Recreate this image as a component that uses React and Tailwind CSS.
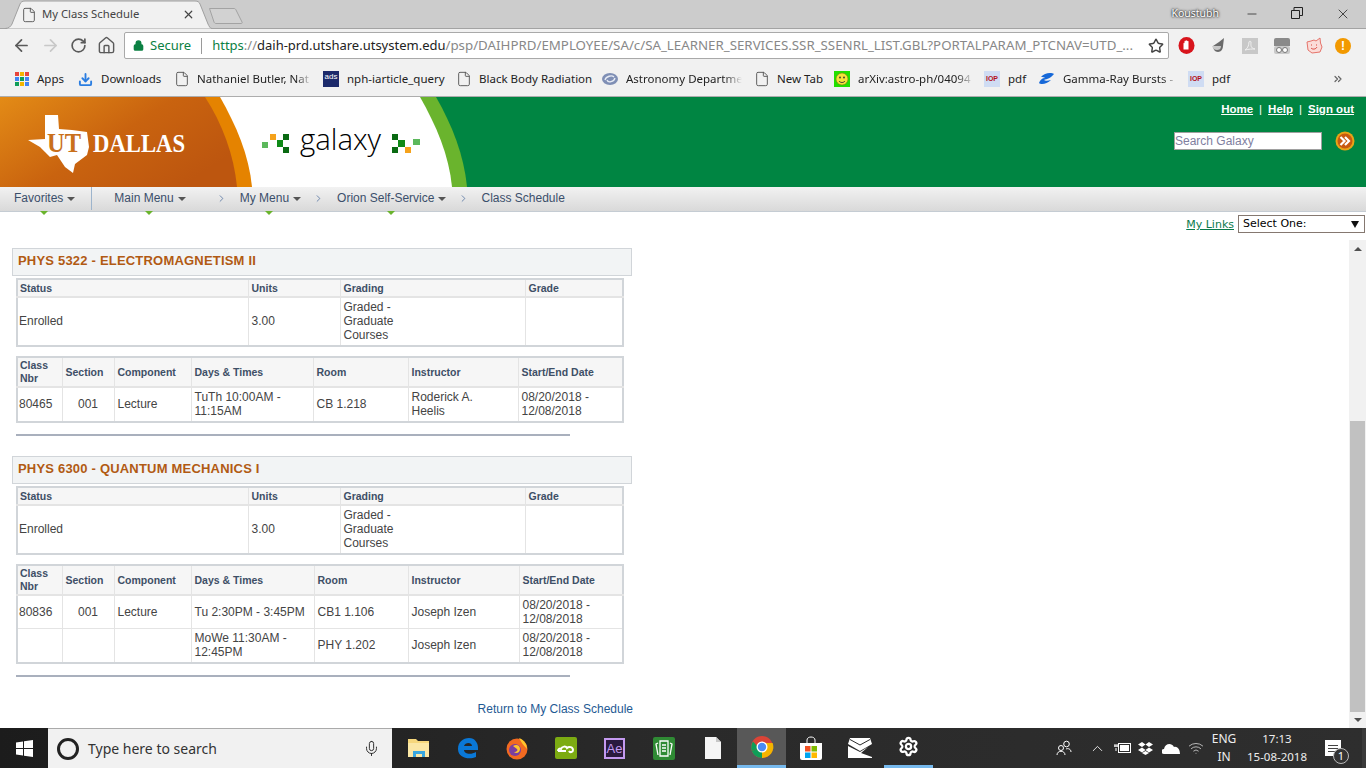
import React from "react";
import { ArrowLeft, ArrowRight, RotateCw, Home, Star, Lock, X, Minus, ChevronRight, ChevronUp, Mic, File, Download, ChevronsRight, Settings, Wifi } from "lucide-react";

const bookmarks = [
  { width: 63, icon: "apps", label: "Apps" },
  { width: 97, icon: "download", label: "Downloads" },
  { width: 148, icon: "doc", label: "Nathaniel Butler, Nat", fade: true },
  { width: 134, icon: "ads", label: "nph-iarticle_query" },
  { width: 145, icon: "doc", label: "Black Body Radiation" },
  { width: 153, icon: "astro", label: "Astronomy Departme", fade: true },
  { width: 79, icon: "doc", label: "New Tab" },
  { width: 150, icon: "smile", label: "arXiv:astro-ph/04094", fade: true },
  { width: 54, icon: "iop", label: "pdf" },
  { width: 150, icon: "gamma", label: "Gamma-Ray Bursts -", fade: true },
  { width: 60, icon: "iop", label: "pdf" },
];

const BookmarkIcon = ({ type }) => {
  if (type === "apps") {
    const colors = ["#e8453c", "#f4b400", "#e8453c", "#4285f4", "#0f9d58", "#4285f4", "#0f9d58", "#f4b400", "#4285f4"];
    return (
      <div className="grid grid-cols-3 gap-[1.5px] w-[14px] h-[14px] shrink-0">
        {colors.map((c, i) => (
          <div key={i} style={{ backgroundColor: c }} />
        ))}
      </div>
    );
  }
  if (type === "download") return <Download size={15} strokeWidth={3} className="text-[#2a7de1] shrink-0" />;
  if (type === "doc") return <File size={16} strokeWidth={1.4} className="text-[#555] shrink-0 -mx-[1px]" />;
  if (type === "ads")
    return (
      <div className="w-4 h-4 bg-[#1c2a6b] text-white text-[8px] leading-[12px] text-center shrink-0 font-['Liberation_Sans',sans-serif]">ads</div>
    );
  if (type === "astro")
    return (
      <svg width="16" height="16" viewBox="0 0 16 16" className="shrink-0">
        <ellipse cx="8" cy="8" rx="8" ry="6" fill="#7f8fb5" />
        <path d="M3 9c1-4 7-5 9-3M13 7c-1 4-7 5-8 2" stroke="#e8ecf5" strokeWidth="1.3" fill="none" />
      </svg>
    );
  if (type === "smile")
    return (
      <svg width="16" height="16" viewBox="0 0 16 16" className="shrink-0">
        <rect width="16" height="16" fill="#22e000" />
        <circle cx="8" cy="8" r="6" fill="#f5e23a" stroke="#7a7a10" strokeWidth="0.6" />
        <circle cx="6" cy="6.5" r="0.9" fill="#333" />
        <circle cx="10" cy="6.5" r="0.9" fill="#333" />
        <path d="M5 10c1.5 2 4.5 2 6 0" stroke="#333" fill="none" />
      </svg>
    );
  if (type === "iop")
    return (
      <div className="w-4 h-4 bg-[#cfdcf3] text-[#b5121b] text-[7px] font-bold leading-4 text-center shrink-0 font-['Liberation_Sans',sans-serif]">IOP</div>
    );
  return (
    <svg width="17" height="16" viewBox="0 0 17 16" className="shrink-0">
      <path d="M1 12c2 2 8 1 12-3-3 1-6 1-7 0 3-1 7-2 10-6C13 1 6 2 3 6c2 0 3 0 4 1-3 0-5 2-6 5z" fill="#1668d8" />
    </svg>
  );
};

const ChromeBar = () => (
  <div className="font-['Noto_Sans',sans-serif] text-[#222]">
    {/* tab strip */}
    <div className="flex h-[28px] bg-[#cccccc] relative">
      <div className="relative w-[207px] ml-[5px] h-[29px] flex items-center pl-[16px] pr-[10px] z-10">
        <svg className="absolute left-0 top-0" width="207" height="29" viewBox="0 0 207 29">
          <path d="M0 28.5C4 28.5 6 26 7 24L15 4C16 2 17 1 20 1H190C193 1 194 2 195 4L203 24C204 26 205 28.5 207 28.5" fill="#f1f1f1" stroke="#a0a0a0" />
        </svg>
        <File size={16} strokeWidth={1.4} className="relative text-[#555] shrink-0" />
        <span className="relative ml-[5px] text-[11.3px] text-[#444] flex-1">My Class Schedule</span>
        <X size={13} strokeWidth={2.2} className="relative text-[#444] mr-[7px]" />
      </div>
      <svg className="mt-[7px] -ml-[4px]" width="36" height="18" viewBox="0 0 36 18">
        <path d="M1.5 1.5H26c1 0 1.5 .5 2 1.5L34 15c.5 1 0 1.5-1 1.5H8c-1 0-1.5-.5-2-1.5Z" fill="#d2d2d2" stroke="#a3a3a3" />
      </svg>
      <div className="ml-auto flex items-center h-[28px]">
        <span className="text-[10.5px] text-white [text-shadow:0_0_2px_#000,0_0_3px_#333] mr-[26px] -mt-[1px]">Koustubh</span>
        <Minus size={14} strokeWidth={1.3} className="text-[#222] mr-[32px]" />
        <svg width="12" height="12" viewBox="0 0 12 12" className="mr-[32px] -mt-[2px]">
          <path d="M.5 3.5h8v8h-8zM3 3.5V.5h8.500v8H8.500" fill="none" stroke="#222" />
        </svg>
        <X size={16} strokeWidth={1.2} className="text-[#222] mr-[15px]" />
      </div>
    </div>
    {/* toolbar */}
    <div className="flex items-center h-[34px] bg-[#f1f1f1] border-t border-[#a3a3a3]">
      <ArrowLeft size={19} strokeWidth={2.2} className="ml-[12px] text-[#5a5a5a]" />
      <ArrowRight size={19} strokeWidth={2.2} className="ml-[10px] text-[#c8c8c8]" />
      <RotateCw size={17} strokeWidth={2.4} className="ml-[10px] text-[#5a5a5a]" />
      <Home size={19} strokeWidth={1.8} className="ml-[10px] text-[#5a5a5a]" />
      <div className="ml-[8px] w-[1045px] h-[27px] flex items-center bg-white border border-[#a9a9a9] rounded-[2px] whitespace-nowrap overflow-hidden">
        <Lock size={11} strokeWidth={3} className="ml-[8px] text-[#0b8043] fill-[#0b8043]" />
        <span className="ml-[6px] text-[13px] text-[#0b8043]">Secure</span>
        <span className="ml-[10px] w-px h-[16px] bg-[#9a9a9a]" />
        <span className="ml-[10px] text-[13px]">
          <span className="text-[#0b8043]">https</span>
          <span className="text-[#888]">://</span>
          <span className="text-[#222]">daih-prd.utshare.utsystem.edu</span>
          <span className="text-[#888] text-[13.3px]">/psp/DAIHPRD/EMPLOYEE/SA/c/SA_LEARNER_SERVICES.SSR_SSENRL_LIST.GBL?PORTALPARAM_PTCNAV=UTD_...</span>
        </span>
        <Star size={16} strokeWidth={2.2} className="ml-auto mr-[4px] text-[#444] shrink-0" />
      </div>
      {/* extensions */}
      <div className="flex items-center">
        <svg width="17" height="17" viewBox="0 0 17 17" className="ml-[9px]">
          <ellipse cx="8.500" cy="8.500" rx="8" ry="8.500" fill="#d8141c" />
          <path d="M5.500 12.500V6.500c0-1 1-1 1 0V4.500c0-1 1-1 1 0V4c0-1 1.500-1 1.500 0v.500c0-1 1.500-1 1.500 0v8z" fill="#fff" />
        </svg>
        <svg width="17" height="17" viewBox="0 0 17 17" className="ml-[16px]">
          <path d="M2 9l6-4 5-4-1 8c0 3-2 6-5 6S2 12 2 9z" fill="#6b6b6b" />
          <path d="M1 9h9c0 3-2 4-4 4s-4-1-5-4z" fill="#c8c8c8" />
        </svg>
        <div className="ml-[14px] w-[16px] h-[16px] bg-[#c8c8c8] flex items-center justify-center">
          <svg width="12" height="12" viewBox="0 0 12 12">
            <path d="M1 10c2-1 4-4 4-8 0-1 2-1 2 0 0 3-1 6 4 7-3 0-6 0-10 1z" fill="none" stroke="#f1f1f1" />
          </svg>
        </div>
        <svg width="16" height="16" viewBox="0 0 16 16" className="ml-[16px]">
          <path d="M2 0h12a2 2 0 0 1 2 2v6H0V2a2 2 0 0 1 2-2z" fill="#8a8a8a" />
          <rect y="8" width="16" height="8" rx="2" fill="#c9c9c9" />
          <circle cx="5" cy="12" r="2.500" fill="#fff" stroke="#777" />
          <circle cx="11" cy="12" r="2.500" fill="#fff" stroke="#777" />
        </svg>
        <svg width="17" height="17" viewBox="0 0 17 17" className="ml-[16px]">
          <path d="M1 5l4-1 3-1 2 1 4-3 .5 5L16 10l-2 5-8 1-4-3z" fill="#fbdcd8" stroke="#e5746b" />
          <path d="M5 8h1M10 8h1M5 11c2 2 5 1 6-1" stroke="#d9463c" fill="none" />
        </svg>
        <div className="ml-[12px] w-[16px] h-[16px] rounded-full bg-[#f29900] text-white text-[12px] font-bold leading-[16px] text-center font-['Liberation_Sans',sans-serif]">!</div>
      </div>
    </div>
    {/* bookmarks */}
    <div className="flex items-center h-[35px] bg-[#f1f1f1] pl-[15px] border-b border-[#adadad] text-[11.5px] whitespace-nowrap">
      {bookmarks.map((b, i) => (
        <div key={i} style={{ width: b.width }} className="flex items-center shrink-0 gap-[8px]">
          <BookmarkIcon type={b.icon} />
          <span className={b.fade ? "overflow-hidden w-[116px] [mask-image:linear-gradient(to_right,black_85%,transparent)]" : ""}>{b.label}</span>
        </div>
      ))}
      <ChevronsRight size={12} strokeWidth={2.4} className="ml-[84px] text-[#666]" />
    </div>
  </div>
);

const SiteHeader = () => (
  <div className="relative h-[90px] bg-[#008542] flex justify-end font-['Liberation_Sans',sans-serif]">
    <svg className="absolute left-0 top-0" width="480" height="90" viewBox="0 0 480 90">
      <defs>
        <linearGradient id="uto" x1="0" y1="0" x2="1" y2="0.6">
          <stop offset="0" stopColor="#e38b16" />
          <stop offset="0.55" stopColor="#c9630f" />
          <stop offset="1" stopColor="#bd560f" />
        </linearGradient>
      </defs>
      <path d="M436 0C452 28 464 58 467 90H0V0Z" fill="#6ab42d" />
      <path d="M420 0C436 28 449 58 452 90H0V0Z" fill="#fff" />
      <path d="M220 0C236 28 249 58 252 90H0V0Z" fill="#e58300" />
      <path d="M205 0C222 26 234 58 237 90H0V0Z" fill="url(#uto)" />
      {/* texas */}
      <path d="M45 18H58L59 32 72 33 87 35 89 50 87 58 75 67 73 76 65 70 57 58 50 60 45 55 40 50 28 43 45 42Z" fill="#fff" />
      <text x="47" y="55" fontFamily="'Liberation Serif',serif" fontSize="27" fontWeight="700" fill="#c9701c" textLength="34" lengthAdjust="spacingAndGlyphs">UT</text>
      <text x="93" y="55" fontFamily="'Liberation Serif',serif" fontSize="26" fontWeight="700" fill="#fff" textLength="92" lengthAdjust="spacingAndGlyphs">DALLAS</text>
      {/* galaxy mark */}
      <rect x="262" y="45" width="6" height="6" fill="#5cb85c" />
      <rect x="270" y="37" width="6" height="6" fill="#f5a21c" />
      <rect x="277" y="43" width="6" height="7" fill="#0f8a17" />
      <rect x="283" y="37" width="6" height="6" fill="#0a6a12" />
      <rect x="283" y="50" width="6" height="6" fill="#0a6a12" />
      <text x="300" y="53" fontFamily="'Open Sans',sans-serif" fontWeight="300" fontSize="29" fill="#000" textLength="81" lengthAdjust="spacingAndGlyphs">galaxy</text>
      <rect x="392" y="37" width="6" height="6" fill="#0a6a12" />
      <rect x="398" y="43" width="7" height="7" fill="#0f8a17" />
      <rect x="392" y="50" width="6" height="6" fill="#0a6a12" />
      <rect x="405" y="50" width="6" height="6" fill="#f5a21c" />
      <rect x="413" y="42" width="7" height="6" fill="#5cb85c" />
    </svg>
    <div className="relative pr-[12px] pt-[4px] flex flex-col items-end">
      <div className="flex items-center text-[11.5px] font-bold text-white">
        <span className="underline">Home</span>
        <span className="mx-[6px] font-normal">|</span>
        <span className="underline">Help</span>
        <span className="mx-[6px] font-normal">|</span>
        <span className="underline">Sign out</span>
      </div>
      <div className="flex items-center mt-[13px] -mr-[1px]">
        <div className="w-[148px] h-[18px] bg-white border border-[#a0a0a0] text-[12px] leading-[16px] text-[#7f7f9f]">Search Galaxy</div>
        <svg width="20" height="20" viewBox="0 0 20 20" className="ml-[13px]">
          <circle cx="10" cy="10" r="9.500" fill="#e8a317" />
          <circle cx="10" cy="10" r="7.500" fill="#c8590f" />
          <path d="M5.500 6l4 4-4 4M10 6l4 4-4 4" stroke="#fff" strokeWidth="2.200" fill="none" />
        </svg>
      </div>
    </div>
  </div>
);

const Caret = () => (
  <svg width="8" height="4" viewBox="0 0 8 4" className="ml-[4px] mt-[2px]">
    <path d="M0 0h8L4 4z" fill="#555" />
  </svg>
);

const NavItem = ({ label, className }) => (
  <div className={`relative flex items-center ${className}`}>
    {label}
    <Caret />
    <svg width="8" height="4" viewBox="0 0 8 4" className="absolute left-1/2 -bottom-[8px] -ml-[5px]">
      <path d="M0 0h8L4 4z" fill="#6ab42d" />
    </svg>
  </div>
);

const Chevron = ({ className }) => <ChevronRight size={11} strokeWidth={1.5} className={`text-[#3a5f95] ${className}`} />;

const NavBar = () => (
  <div className="flex items-center h-[25px] pl-[14px] pb-[2px] bg-gradient-to-b from-[#f2f2f2] to-[#d9d9d9] border-b border-[#c5ccd3] text-[12px] text-[#3b4f6b] font-['Liberation_Sans',sans-serif]">
    <NavItem label="Favorites" />
    <div className="ml-[16px] w-px h-[23px] bg-[#9db4cc]" />
    <NavItem label="Main Menu" className="ml-[22px]" />
    <Chevron className="ml-[30px]" />
    <NavItem label="My Menu" className="ml-[13px]" />
    <Chevron className="ml-[12px]" />
    <NavItem label="Orion Self-Service" className="ml-[13px]" />
    <Chevron className="ml-[12px]" />
    <span className="ml-[12px]">Class Schedule</span>
  </div>
);

const th = "border-r border-b-2 border-[#e4e4e4] bg-[#f6f6f6] text-left font-bold text-[10.5px] leading-[13px] text-[#3e4f66] px-[3px] first:pl-[2px] align-middle";
const td = "border-r border-b border-[#e4e4e4] text-[12px] leading-[14px] text-[#444] px-[3px] first:pl-[1px] align-middle";

const StatusTable = () => (
  <table className="w-[608px] table-fixed border-collapse border-2 border-[#d1d5d9] ml-[4px] mt-[2px]">
    <colgroup>
      <col className="w-[231px]" />
      <col className="w-[92px]" />
      <col className="w-[185px]" />
      <col />
    </colgroup>
    <tbody>
      <tr className="h-[18px]">
        <th className={th}>Status</th>
        <th className={th}>Units</th>
        <th className={th}>Grading</th>
        <th className={th}>Grade</th>
      </tr>
      <tr className="h-[49px]">
        <td className={`${td} pb-px`}>Enrolled</td>
        <td className={`${td} pb-px`}>3.00</td>
        <td className={`${td} pb-px`}>
          Graded -<br />Graduate<br />Courses
        </td>
        <td className={td}></td>
      </tr>
    </tbody>
  </table>
);

const ClassTable = ({ rows, wide }) => (
  <table className="w-[608px] table-fixed border-collapse border-2 border-[#d1d5d9] ml-[4px] mt-[9px]">
    <colgroup>
      <col className="w-[45px]" />
      <col className="w-[52px]" />
      <col className="w-[77px]" />
      <col className={wide ? "w-[123px]" : "w-[122px]"} />
      <col className={wide ? "w-[94px]" : "w-[95px]"} />
      <col className={wide ? "w-[111px]" : "w-[110px]"} />
      <col />
    </colgroup>
    <tbody>
      <tr className="h-[30px]">
        <th className={th}>Class<br />Nbr</th>
        <th className={th}>Section</th>
        <th className={th}>Component</th>
        <th className={th}>Days &amp; Times</th>
        <th className={th}>Room</th>
        <th className={th}>Instructor</th>
        <th className={th}>Start/End Date</th>
      </tr>
      {rows.map((r, i) => (
        <tr key={i} className={r.height}>
          <td className={`${td} ${r.cell}`}>{r.nbr}</td>
          <td className={`${td} ${r.cell} text-center`}>{r.section}</td>
          <td className={`${td} ${r.cell}`}>{r.component}</td>
          <td className={`${td} ${r.cell}`}>{r.days}</td>
          <td className={`${td} ${r.cell}`}>{r.room}</td>
          <td className={`${td} ${r.cell}`}>{r.instructor}</td>
          <td className={`${td} ${r.cell}`}>08/20/2018 -<br />12/08/2018</td>
        </tr>
      ))}
    </tbody>
  </table>
);

const Course = ({ title, rows, wide }) => (
  <div>
    <div className="w-[620px] h-[28px] flex items-center pl-[5px] pb-[2px] bg-[#f2f4f5] border border-[#d1d5d9] text-[13px] tracking-[0.2px] font-bold text-[#b15a13]">{title}</div>
    <StatusTable />
    <ClassTable rows={rows} wide={wide} />
    <div className="ml-[4px] mt-[11px] w-[554px] h-[2px] bg-[#a9b0bd]" />
  </div>
);

const Content = () => (
  <div className="flex-1 min-h-0 flex flex-col bg-white font-['Liberation_Sans',sans-serif]">
    <div className="h-[28px] flex items-start justify-end pt-[3px] pr-px font-['DejaVu_Sans',sans-serif] text-[11px]">
      <span className="text-[#0a7a4b] underline mt-[2px]">My Links</span>
      <div className="ml-[4px] w-[127px] h-[18px] flex items-center justify-between px-[4px] bg-white border border-[#857870] text-black">
        <span>Select One:</span>
        <svg width="8" height="7" viewBox="0 0 8 7" className="mr-px">
          <path d="M0 0h8L4 7z" fill="#111" />
        </svg>
      </div>
    </div>
    <div className="flex-1 min-h-0 flex">
      <div className="flex-1 pl-[12px] pt-[8px]">
        <Course
          title="PHYS 5322 - ELECTROMAGNETISM II"
          rows={[
            {
              nbr: "80465",
              section: "001",
              component: "Lecture",
              days: "TuTh 10:00AM - 11:15AM",
              room: "CB 1.218",
              instructor: (
                <>
                  Roderick A.
                  <br />
                  Heelis
                </>
              ),
              height: "h-[35px]",
              cell: "pb-[2px]",
            },
          ]}
        />
        <div className="h-[20px]" />
        <Course
          title="PHYS 6300 - QUANTUM MECHANICS I"
          wide
          rows={[
            { nbr: "80836", section: "001", component: "Lecture", days: "Tu 2:30PM - 3:45PM", room: "CB1 1.106", instructor: "Joseph Izen", height: "h-[33px]", cell: "" },
            { nbr: "", section: "", component: "", days: "MoWe 11:30AM - 12:45PM", room: "PHY 1.202", instructor: "Joseph Izen", height: "h-[35px]", cell: "" },
          ]}
        />
        <div className="w-[621px] mt-[23px] text-right text-[12px] text-[#1f5a94]">Return to My Class Schedule</div>
      </div>
      <div className="w-[17px] bg-[#f1f1f1] flex flex-col items-center">
        <svg width="8" height="4" viewBox="0 0 8 4" className="mt-[7px]">
          <path d="M0 4h8L4 0z" fill="#505050" />
        </svg>
        <div className="mt-[170px] w-[15px] h-[291px] bg-[#c1c1c1]" />
        <svg width="8" height="4" viewBox="0 0 8 4" className="mt-[6px]">
          <path d="M0 0h8L4 4z" fill="#505050" />
        </svg>
      </div>
    </div>
  </div>
);

const Slot = ({ children, className = "" }) => (
  <div className={`w-[49px] h-[40px] flex items-center justify-center shrink-0 ${className}`}>{children}</div>
);

const Taskbar = () => (
  <div className="flex items-center h-[40px] bg-gradient-to-r from-[#1c1c1c] via-[#2a2a2a] to-[#2e2e2e] text-white font-['Noto_Sans',sans-serif]">
    <div className="w-[48px] flex justify-center">
      <svg width="17" height="17" viewBox="0 0 17 17">
        <path d="M0 2.400L7 1.400V8H0zM8 1.300L17 0V8H8zM0 9h7v6.600L0 14.600zM8 9h9v8L8 15.700z" fill="#fff" />
      </svg>
    </div>
    <div className="w-[344px] h-[40px] flex items-center bg-[#f1f1f1] border-t border-[#aaa]">
      <div className="ml-[9px] w-[22px] h-[22px] rounded-full border-[3px] border-[#222]" />
      <span className="ml-[9px] text-[14px] text-[#333]">Type here to search</span>
      <Mic size={17} strokeWidth={1.3} className="ml-auto mr-[12px] text-[#222]" />
    </div>
    <div className="flex ml-[2px]">
      <Slot>
        <svg width="23" height="22" viewBox="0 0 23 22">
          <path d="M1 2h8l2 2h11v16H1z" fill="#f6d77c" />
          <path d="M1 6h21v14H1z" fill="#fbe7a5" />
          <path d="M6 20v-6h12v6h-3v-3H9v3z" fill="#39a7e0" />
        </svg>
      </Slot>
      <Slot>
        <svg width="22" height="22" viewBox="0 0 22 22">
          <path d="M1 12C1 5 6 1 12 1c6 0 9 5 9 10v2H7c0 4 7 5 12 2v5c-7 3-18 1-18-8zm6-3h8c0-4-7-4-8 0z" fill="#0a78d7" />
        </svg>
      </Slot>
      <Slot>
        <svg width="24" height="24" viewBox="0 0 24 24">
          <circle cx="12" cy="13" r="10.500" fill="#f26a21" />
          <circle cx="10" cy="14" r="6" fill="#7b3fa0" />
          <path d="M14 2c5 2 8 6 8 11-3-3-6-7-8-11zM8 10c3-2 7-1 7 3s-4 5-6 3c3 0 4-2 3-3z" fill="#ffc62c" />
        </svg>
      </Slot>
      <Slot>
        <svg width="22" height="22" viewBox="0 0 22 22">
          <rect width="22" height="22" rx="2" fill="#7cab12" />
          <path d="M3 14c0-2 2-3 3-2 1-3 5-3 6-1 2-2 6-1 6 2 0 2-3 3-4 1M3 14h8" stroke="#fff" strokeWidth="2" fill="none" />
        </svg>
      </Slot>
      <Slot>
        <div className="w-[21px] h-[21px] bg-[#2a1a3e] border-2 border-[#c49af0] text-[#c49af0] text-[13px] leading-[17px] text-center font-['Liberation_Sans',sans-serif]">Ae</div>
      </Slot>
      <Slot>
        <svg width="22" height="23" viewBox="0 0 22 23">
          <rect width="22" height="23" rx="2" fill="#2f8a34" />
          <path d="M7 4h8v15H7zM5 6l-2 1 2 11M17 6l2 1-2 11M9 8h4M9 11h4M9 14h4" stroke="#fff" strokeWidth="1.300" fill="none" />
        </svg>
      </Slot>
      <Slot>
        <svg width="16" height="22" viewBox="0 0 16 22">
          <path d="M0 0h11l5 5v17H0z" fill="#f5f5f5" />
          <path d="M11 0l5 5h-5z" fill="#c8c8c8" />
        </svg>
      </Slot>
      <Slot className="bg-[#585858] border-b-[3px] border-[#76b9ed]">
        <svg width="24" height="24" viewBox="0 0 24 24">
          <circle cx="12" cy="12" r="11" fill="#db4437" />
          <path d="M12 12L1.800 16A11 11 0 0 0 12 23z" fill="#0f9d58" />
          <path d="M12 12v11a11 11 0 0 0 10.600-15H12z" fill="#f4b400" />
          <path d="M12 12L1.800 16A11 11 0 0 1 3 6.500L8 12z" fill="#0f9d58" />
          <circle cx="12" cy="12" r="5.500" fill="#fff" />
          <circle cx="12" cy="12" r="4.200" fill="#4a8bf5" />
        </svg>
      </Slot>
      <Slot>
        <svg width="24" height="24" viewBox="0 0 24 24">
          <path d="M1 7h22v15a2 2 0 0 1-2 2H3a2 2 0 0 1-2-2z" fill="#fff" />
          <path d="M8 7V4c0-4 8-4 8 0v3" stroke="#fff" fill="none" />
          <rect x="6" y="10" width="5.500" height="5.500" fill="#f25022" />
          <rect x="12.500" y="10" width="5.500" height="5.500" fill="#7fba00" />
          <rect x="6" y="16.500" width="5.500" height="5.500" fill="#00a4ef" />
          <rect x="12.500" y="16.500" width="5.500" height="5.500" fill="#ffb900" />
        </svg>
      </Slot>
      <Slot>
        <svg width="24" height="20" viewBox="0 0 24 20">
          <path d="M2 0h20l2 6-12 7L0 6z" fill="#fff" />
          <path d="M2 1.500L12 7l10-5.500" fill="none" stroke="#2a2a2a" />
          <path d="M0 8l12 6 8-5-7 6 11 4v1H0z" fill="#fff" />
        </svg>
      </Slot>
      <Slot className="border-b-[3px] border-[#76b9ed]">
        <Settings size={21} strokeWidth={2.6} className="text-white" />
      </Slot>
    </div>
    <div className="ml-auto flex items-center h-[40px]">
      <svg width="16" height="16" viewBox="0 0 16 16" className="mr-[17px]">
        <circle cx="10.500" cy="4" r="2.800" stroke="#fff" fill="none" />
        <circle cx="5" cy="8" r="2.500" stroke="#fff" fill="none" />
        <path d="M1 15c0-5 8-5 8 0M10 9c2-1 5 0 5 3" stroke="#fff" fill="none" />
      </svg>
      <ChevronUp size={17} strokeWidth={1.2} className="mr-[8px]" />
      <svg width="17" height="12" viewBox="0 0 17 12" className="mr-[7px]">
        <rect x="4.500" y="1.500" width="12" height="9" fill="none" stroke="#fff" />
        <rect x="6" y="3" width="9" height="6" fill="#fff" />
        <path d="M0 4h4M1 2v3M3 2v3M2 6v3" stroke="#fff" />
      </svg>
      <svg width="15" height="13" viewBox="0 0 15 13" className="mr-[9px]">
        <path d="M4 0l3.500 2.500L4 5 0 2.500zM11 0l4 2.500L11 5 7.500 2.500zM4 5.500l3.500 2.500L4 10.500 0 8zM11 5.500L15 8l-4 2.500L7.500 8zM4 11l3.500-2 3.500 2-3.500 2z" fill="#fff" />
      </svg>
      <svg width="18" height="11" viewBox="0 0 18 11" className="mr-[8px]">
        <path d="M2 11a2.500 2.500 0 0 1 0-5c1-5 7-7 10-2 3-1 6 2 6 7z" fill="#fff" />
      </svg>
      <Wifi size={16} strokeWidth={1.3} className="text-[#ccc] mr-[3px]" />
      <div className="w-[34px] text-center text-[12px] leading-[18px] text-[#eee]">
        ENG<br />IN
      </div>
      <div className="ml-[2px] w-[68px] text-center text-[11.5px] leading-[18px] text-[#eee]">
        17:13<br />15-08-2018
      </div>
      <div className="relative ml-[14px] mr-[21px] w-[16px] h-[16px] bg-white flex flex-col items-center justify-center gap-[2px]">
        <div className="w-[10px] h-px bg-[#444]" />
        <div className="w-[10px] h-px bg-[#444]" />
        <div className="w-[10px] h-px bg-[#444]" />
        <div className="absolute -right-[8px] -bottom-[8px] w-[16px] h-[16px] rounded-full bg-[#333] border border-[#bbb] text-[11px] leading-[14px] text-center">1</div>
      </div>
      <div className="w-[4px] h-[40px] bg-[#3a3a3a]" />
    </div>
  </div>
);

export default function App() {
  return (
    <div className="w-[1366px] h-[768px] overflow-hidden flex flex-col">
      <ChromeBar />
      <SiteHeader />
      <NavBar />
      <Content />
      <Taskbar />
    </div>
  );
}
